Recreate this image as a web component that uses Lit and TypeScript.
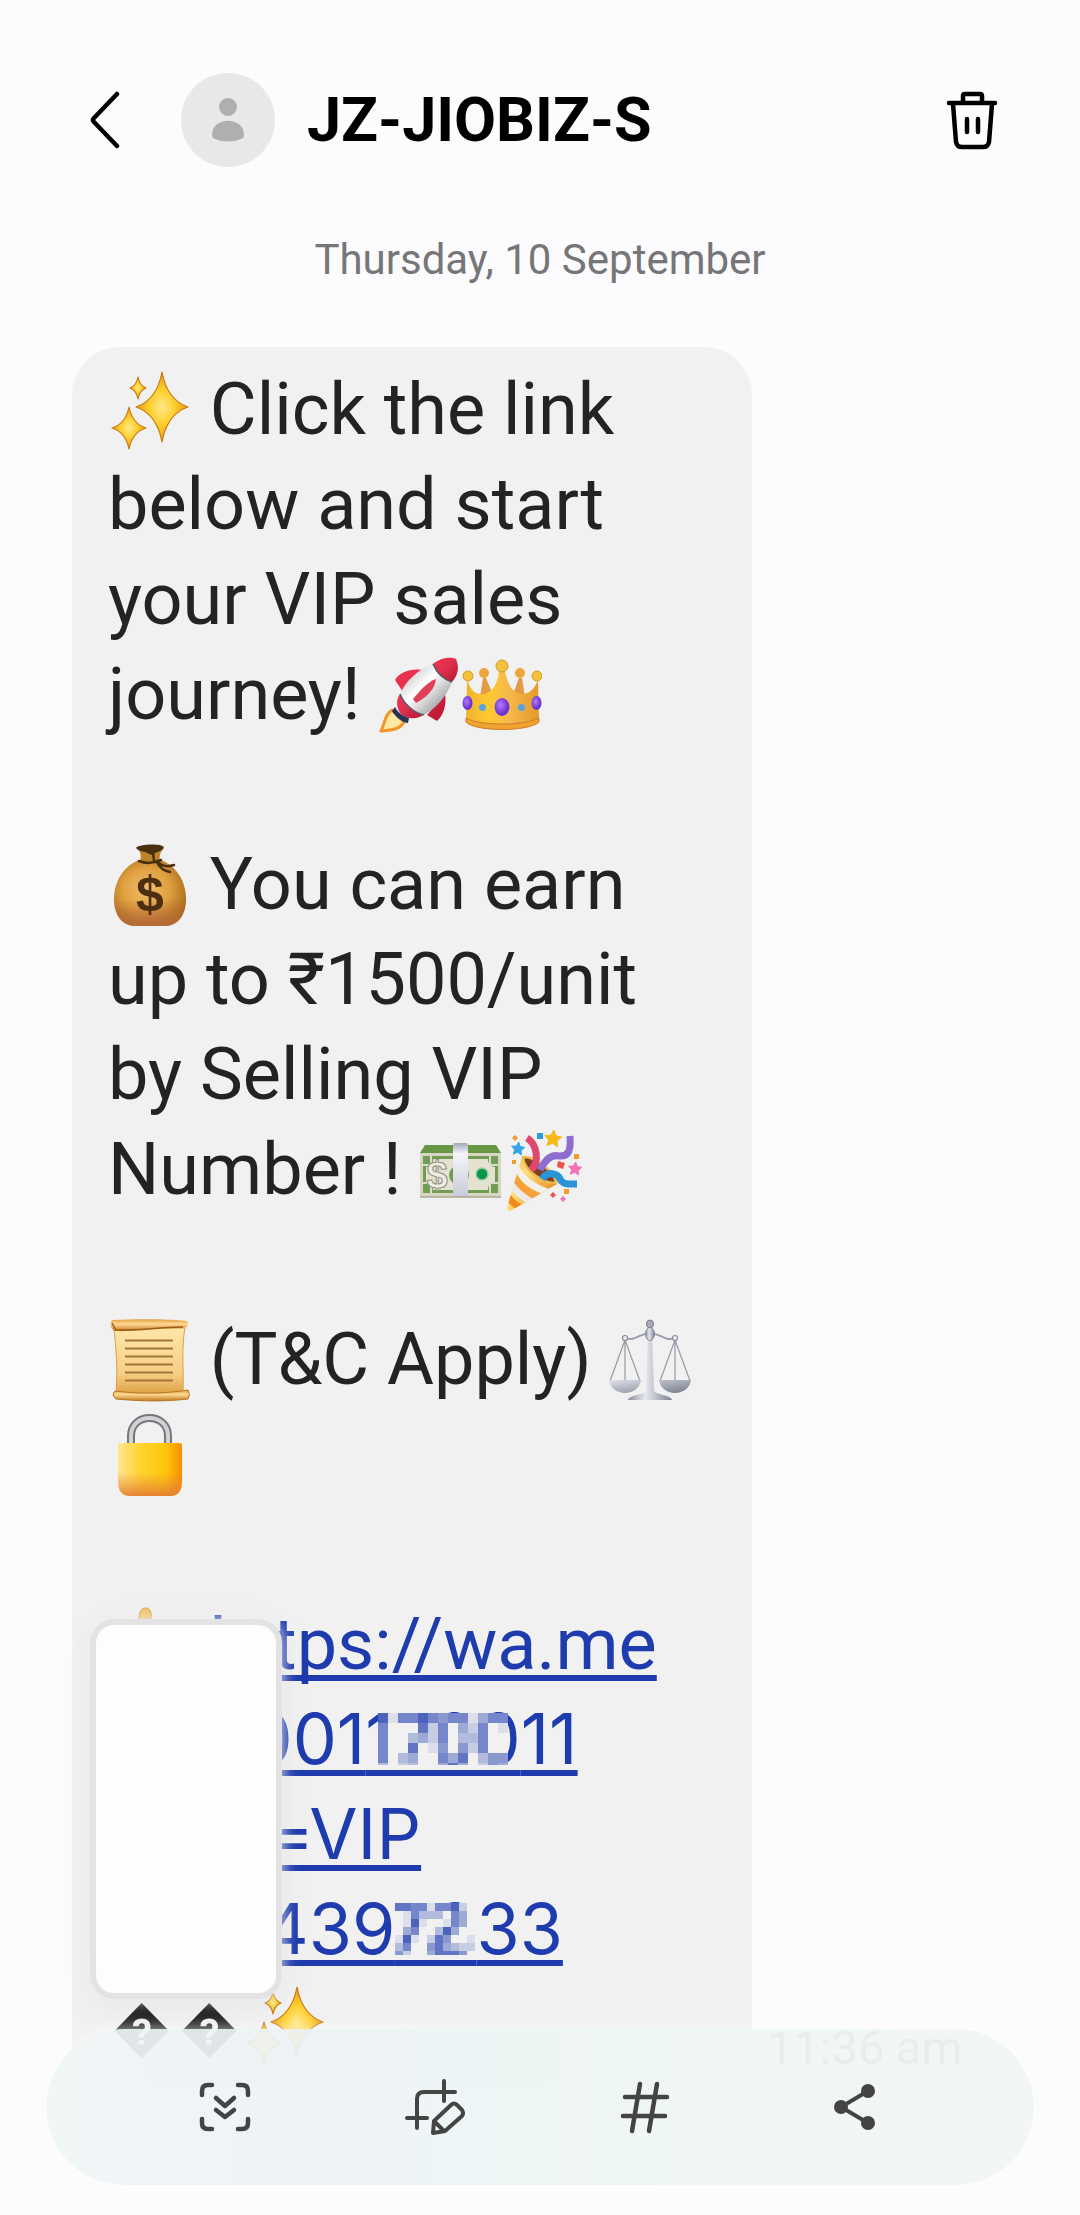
// app.ts
import { LitElement, html, css, svg } from "lit";
import { customElement, property } from "lit/decorators.js";

// four pointed star, used by the sparkles emoji
const star4 = (x: number, y: number, rx: number, ry: number) => {
  const a = rx * 0.2;
  const b = ry * 0.2;
  return svg`<path fill="url(#spark)" stroke="#c97a14" stroke-width="1.2" stroke-linejoin="round"
    d="M${x} ${y - ry} Q${x + a} ${y - b} ${x + rx} ${y} Q${x + a} ${y + b} ${x} ${y + ry}
       Q${x - a} ${y + b} ${x - rx} ${y} Q${x - a} ${y - b} ${x} ${y - ry}Z"/>`;
};

// five pointed confetti star
const star5 = (x: number, y: number, r: number, fill: string) => {
  const points = Array.from({ length: 10 }, (_, i) => {
    const d = i % 2 ? r * 0.48 : r;
    const t = (Math.PI / 5) * i - Math.PI / 2 + 0.1;
    return `${(x + d * Math.cos(t)).toFixed(1)},${(y + d * Math.sin(t)).toFixed(1)}`;
  }).join(" ");
  return svg`<polygon points=${points} fill=${fill} stroke=${fill} stroke-width="1" stroke-linejoin="round"/>`;
};

const EMOJI: Record<string, unknown> = {
  sparkles: svg`
    <defs><radialGradient id="spark"><stop offset="0" stop-color="#ffe88a"/><stop offset=".5" stop-color="#fdce2c"/><stop offset="1" stop-color="#e59a14"/></radialGradient></defs>
    ${star4(54, 39, 26, 35)}${star4(30, 20, 8, 11)}${star4(21, 60, 17, 21)}`,
  rocket: svg`
    <defs>
      <linearGradient id="hull" x1="0.2" y1="0.2" x2="0.8" y2="0.8"><stop offset="0" stop-color="#d4d4d8"/><stop offset=".4" stop-color="#fff"/><stop offset="1" stop-color="#a4a4a8"/></linearGradient>
      <linearGradient id="red" x1="0" y1="0" x2="1" y2="1"><stop offset="0" stop-color="#f1304e"/><stop offset=".4" stop-color="#e2324e"/><stop offset="1" stop-color="#b51530"/></linearGradient>
    </defs>
    <path d="M14 57 C7 61 7 70 3 78 C12 77 22 77 26 69Z" fill="#ffe9a0" stroke="#f2952a" stroke-width="3" stroke-linejoin="round"/>
    <path d="M44 17 C32 15 21 20 17 27 L25 39Z M67 41 C69 52 65 63 59 68 L49 62Z" fill="url(#red)"/>
    <path d="M22 41 C17 48 19 56 23 61 C29 66 38 67 45 62Z" fill="url(#red)"/>
    <path d="M55 11 C40 16 27 29 22 41 C26 51 36 60 46 62 C59 55 69 42 74 29Z" fill="url(#hull)"/>
    <path d="M55 11 C64 4 73 4 78 6 C81 13 81 21 74 29 C65 26 59 21 55 11Z" fill="url(#red)"/>
    <path d="M55 11 C59 21 65 26 74 29 M22 41 C26 51 36 60 46 62" fill="none" stroke="#555b66" stroke-width="1.5"/>
    <path d="M58 26 C50 28 40 40 35 46 L38 50 C49 44 57 36 58 26Z" fill="#df3f57"/>
    <path d="M17 54 C20 60 25 63 31 65 L30 70 C23 69 17 63 14 58Z" fill="#29335a"/>`,
  crown: svg`
    <defs>
      <linearGradient id="gold"><stop offset="0" stop-color="#efb32d"/><stop offset=".3" stop-color="#ffc931"/><stop offset=".6" stop-color="#f5b84c"/><stop offset="1" stop-color="#e39b24"/></linearGradient>
      <radialGradient id="gem" cx=".4" cy=".4"><stop offset="0" stop-color="#b57cff"/><stop offset="1" stop-color="#6d32cc"/></radialGradient>
    </defs>
    <path d="M20 44 L23 25 H26 L34 44Z M52 44 L59 25 H62 L65 44Z" fill="#e39a45"/>
    <circle cx="24" cy="20" r="5" fill="#eda63e"/><circle cx="60" cy="20" r="5" fill="#eda63e"/>
    <path d="M7 27 C12 39 15 41 23 41 C34 40 38 28 39 18 H45 C47 29 52 40 61 41 C69 41 74 37 78 27 L79 68 C72 79 13 79 6 68Z" fill="url(#gold)"/>
    <path d="M6 65 C19 73 66 73 79 65 V69 C69 79 15 79 6 69Z" fill="#f0a32e" stroke="#cf7b2e" stroke-width="1"/>
    <g fill="#f3c23d" stroke="#d69b22"><circle cx="42" cy="13" r="6"/><circle cx="8" cy="23" r="5"/><circle cx="77" cy="23" r="5"/></g>
    <ellipse cx="42" cy="54" rx="7.5" ry="9" fill="url(#gem)"/>
    <ellipse cx="7.5" cy="50" rx="5" ry="7" fill="url(#gem)"/><ellipse cx="76.5" cy="50" rx="5" ry="7" fill="url(#gem)"/>
    <circle cx="22.5" cy="54.5" r="3.5" fill="#55a5e2"/><circle cx="61.5" cy="54.5" r="3.5" fill="#55a5e2"/>`,
  bag: svg`
    <defs>
      <radialGradient id="sack" cx=".45" cy=".45" r=".6"><stop offset="0" stop-color="#f2c06b"/><stop offset=".55" stop-color="#dfa040"/><stop offset="1" stop-color="#a9691a"/></radialGradient>
      <linearGradient id="sackBase" x1="0" y1="0" x2="0" y2="1"><stop offset=".6" stop-color="#b86a3c" stop-opacity="0"/><stop offset="1" stop-color="#b86a3c" stop-opacity=".9"/></linearGradient>
    </defs>
    <path d="M31 17 C16 23 6 38 6 56 C6 72 14 83 28 83 H56 C70 83 78 72 78 56 C78 38 68 23 53 17Z" fill="url(#sack)"/>
    <path d="M31 17 C16 23 6 38 6 56 C6 72 14 83 28 83 H56 C70 83 78 72 78 56 C78 38 68 23 53 17Z" fill="url(#sackBase)"/>
    <path d="M29 5 C34 10 33 15 32 19 H52 C51 14 52 9 56 5Z" fill="#bf822b"/>
    <path d="M28 5 C30 1 53 0 56 4 C55 8 48 9 43 12 C38 8 31 9 28 5Z" fill="#46300f"/>
    <path d="M31 18 C38 21 46 20 53 17 M49 18 C54 24 60 24 66 22 M49 19 C52 26 57 28 62 29 M45 9 L46 18" fill="none" stroke="#46300f" stroke-width="2.5" stroke-linecap="round"/>
    <text x="42" y="68" class="bag-sign">$</text>`,
  cash: svg`
    <defs><linearGradient id="band" x1="0" y1="0" x2="0" y2="1"><stop offset="0" stop-color="#a6a8b8"/><stop offset=".2" stop-color="#f5f5fa"/><stop offset="1" stop-color="#c9c9da"/></linearGradient></defs>
    <path d="M6 17 H77 L82 25 H1Z" fill="#669744"/>
    <rect x="1" y="25" width="81" height="44" fill="#d9d5c3"/>
    <rect x="4" y="28" width="75" height="37" fill="#719c53"/>
    <path d="M14 31 H69 C69 36 72 39 76 39 V54 C72 54 69 57 69 62 H14 C14 57 11 54 7 54 V39 C11 39 14 36 14 31Z" fill="#e5e2d1"/>
    <path d="M4 37 H12 V28 M4 55 H12 V65 M79 37 H71 V28 M79 55 H71 V65" fill="none" stroke="#dedcc9" stroke-width="2"/>
    <circle cx="40" cy="47" r="10" fill="#719c53"/>
    <circle cx="63" cy="46" r="6" fill="#09964a" stroke="#9bcfa2" stroke-width="1.5"/>
    <rect x="34" y="15" width="15" height="54" rx="2" fill="url(#band)"/>
    <path d="M1 69 H82" stroke="#aaa68f" stroke-width="1.5"/>
    <text x="18" y="60" class="cash-sign">$</text>`,
  party: svg`
    <defs>
      <linearGradient id="cone" x1="0" y1="0.3" x2="0.8" y2="0.8"><stop offset="0" stop-color="#f6c45a"/><stop offset=".35" stop-color="#ffdf7a"/><stop offset="1" stop-color="#e89225"/></linearGradient>
      <clipPath id="coneClip"><path d="M21 29 L6 80 Q7 84 11 82 L56 56Z"/></clipPath>
    </defs>
    <path d="M21 29 L6 80 Q7 84 11 82 L56 56Z" fill="url(#cone)"/>
    <g clip-path="url(#coneClip)" fill="none" stroke-width="7">
      <path d="M14 38 Q24 58 50 65" stroke="#f4f0ec"/><path d="M9 54 Q17 68 35 76" stroke="#ece9e9"/><path d="M6 68 Q12 76 20 80" stroke="#f08a1c"/><path d="M12 46 Q20 63 42 71" stroke="#f7a13a"/>
    </g>
    <path d="M22 29 C34 28 53 43 55 55 C43 56 23 43 22 29Z" fill="#7b3f22" stroke="#f0bb4c" stroke-width="2.5"/>
    <g fill="none" stroke-width="7">
      <path d="M30 42 C39 34 36 16 26 10" stroke="#e0476f"/>
      <path d="M39 42 C44 32 50 26 58 28 C68 29 70 22 69 8" stroke="#8e6dd0"/>
      <path d="M41 51 C47 42 57 46 59 51 C62 57 68 56 76 56" stroke="#2995d8"/>
    </g>
    ${star5(52, 11, 9, "#f6b915")}${star5(17, 21, 7, "#35a5e8")}${star5(74, 41, 7, "#f272b4")}
    <rect x="36" y="5" width="6" height="6" fill="#2d9bdd"/>
    <g fill="#f29a2e"><path d="M14 7l3 3-3 3-3-3z"/><rect x="11" y="32" width="4" height="4"/><rect x="73" y="26" width="5" height="5"/><rect x="63" y="61" width="5" height="5"/></g>
    <g fill="#ef5350"><path d="M57 33l7 2-2 6-6-2z"/><path d="M52 64l3 3-3 3-3-3z"/></g>
    <path d="M62 68l3 3-3 3-3-3z" fill="#f272b4"/>`,
  scroll: svg`
    <defs>
      <linearGradient id="paper" x1="0" y1="0" x2="0" y2="1"><stop offset="0" stop-color="#ffe6a8"/><stop offset=".7" stop-color="#f7cf85"/><stop offset="1" stop-color="#dfa348"/></linearGradient>
      <linearGradient id="roll" x1="0" y1="0" x2="0" y2="1"><stop offset="0" stop-color="#dfa043"/><stop offset=".4" stop-color="#ffd992"/><stop offset="1" stop-color="#c27a20"/></linearGradient>
    </defs>
    <path d="M6 10 H77 C73 30 76 55 75 75 H8 C10 50 8 30 6 10Z" fill="url(#paper)" stroke="#d9a04a"/>
    <path d="M4 2 C30 1 60 1 79 3 Q81 5 79 9 L75 10 C50 9 30 14 6 13 Q0 8 4 2Z" fill="url(#roll)"/>
    <path d="M4 5 L8 12 C30 13 50 9 75 9" fill="none" stroke="#9d5c12" stroke-width="1.5"/>
    <path d="M7 73 C30 76 55 76 80 72 Q83 77 80 81 C55 84 30 83 8 81 Q3 77 7 73Z" fill="url(#roll)" stroke="#b87420"/>
    <path d="M17 22.5H65 M17 30.5H65 M17 38.5H65 M17 46.5H65 M17 54.5H65 M17 62.5H65" stroke="#a2763a" stroke-width="2.2"/>`,
  scales: svg`
    <defs>
      <linearGradient id="steel"><stop offset="0" stop-color="#8b8e9b"/><stop offset=".4" stop-color="#e6e8f0"/><stop offset="1" stop-color="#7d8090"/></linearGradient>
      <linearGradient id="pan" x1="0" y1="0" x2="1" y2="1"><stop offset="0" stop-color="#dfe1ea"/><stop offset="1" stop-color="#757989"/></linearGradient>
    </defs>
    <path d="M16 20 C27 24 31 14 41 16 C51 14 55 24 66 20" fill="none" stroke="#9a9daa" stroke-width="2"/>
    <path d="M16 22 L1 63 M16 22 V63 M16 22 L31 63 M66 22 L51 63 M66 22 V63 M66 22 L81 63" stroke="#989ba6" stroke-width="1.2"/>
    <path d="M0 62 H32 C31 70 24 75 16 75 C8 75 1 70 0 62Z M50 62 H82 C81 70 74 75 66 75 C58 75 51 70 50 62Z" fill="url(#pan)"/>
    <path d="M39 18 H43 L45 73 C48 77 62 77 63 82 H19 C20 77 34 77 37 73Z" fill="url(#steel)"/>
    <ellipse cx="41" cy="6" rx="3.5" ry="4" fill="#a7aab6" stroke="#777b88"/><ellipse cx="41" cy="16" rx="4.5" ry="6.5" fill="url(#steel)" stroke="#888b98"/>
    <g fill="#eceef3" stroke="#888b98" stroke-width="1.2"><circle cx="16" cy="20" r="2.5"/><circle cx="66" cy="20" r="2.5"/></g>`,
  lock: svg`
    <defs>
      <linearGradient id="brass"><stop offset="0" stop-color="#ffe590"/><stop offset=".35" stop-color="#ffd42e"/><stop offset=".75" stop-color="#ffc60a"/><stop offset="1" stop-color="#fb8e05"/></linearGradient>
      <linearGradient id="brassBase" x1="0" y1="0" x2="0" y2="1"><stop offset=".55" stop-color="#e8863c" stop-opacity="0"/><stop offset="1" stop-color="#e07a35" stop-opacity=".9"/></linearGradient>
    </defs>
    <path d="M23 31 V23 C23 -1 60 -1 60 23 V31" fill="none" stroke="#77777b" stroke-width="8"/>
    <path d="M23 31 V23 C23 -1 60 -1 60 23 V31" fill="none" stroke="#d2d2d6" stroke-width="4"/>
    <path d="M12 30 H72 Q74 30 74 33 V68 Q74 83 62 83 H22 Q10 83 10 68 V33 Q10 30 12 30Z" fill="url(#brass)"/>
    <path d="M12 30 H72 Q74 30 74 33 V68 Q74 83 62 83 H22 Q10 83 10 68 V33 Q10 30 12 30Z" fill="url(#brassBase)"/>`,
  hand: svg`
    <path d="M31 16 C31 8 34 5 38 5 C42 5 44 9 43 16 L42 30 H78 V40 H48 V72 H18 C4 60 6 42 31 30Z" fill="#f3c262" stroke="#d79c3c"/>`,
};

// strength of every cell in the blurred-out digits, 0 = bubble colour
const MOSAIC_WIDE = [
  "8166865661466",
  "6000726042601",
  "6003426033600",
  "6007015052600",
  "6034006470355",
  "3023004740254",
];
const MOSAIC_NARROW = [
  "7766166820",
  "0163330640",
  "0181001640",
  "0460038400",
  "1810275001",
  "3600574322",
  "5200477750",
];

@customElement("pixel-mask")
export class PixelMask extends LitElement {
  @property({ attribute: false }) rows: string[] = [];
  @property({ type: Number }) cell = 10;

  static styles = css`
    :host {
      position: absolute;
      left: 50%;
      bottom: 16px;
      height: 52px;
      transform: translateX(-50%);
    }
    .cells {
      display: block;
      background: #f1f1f1;
    }
  `;

  render() {
    const width = this.cell * this.rows[0].length;
    return html`
      <svg class="cells" width=${width} height="52" viewBox="0 0 ${width} 52" fill="#2340b0" shape-rendering="crispEdges" aria-hidden="true">
        ${this.rows.map((row, y) =>
          [...row].map(
            (level, x) => svg`<rect x=${x * this.cell} y=${y * this.cell} width=${this.cell} height=${this.cell} opacity=${Number(level) / 10}/>`
          )
        )}
      </svg>
    `;
  }
}

@customElement("app-root")
export class AppRoot extends LitElement {
  static styles = css`
    :host {
      display: block;
      min-height: 100vh;
      overflow: hidden;
      background: #fcfcfe;
      color: #232323;
      font-family: Roboto, "Liberation Sans", sans-serif;
    }
    button {
      display: flex;
      align-items: center;
      justify-content: center;
      padding: 0;
      border: none;
      background: none;
      color: inherit;
      cursor: pointer;
    }
    .header {
      display: flex;
      align-items: center;
      padding: 72px 82px 0 90px;
      color: #000;
    }
    .avatar {
      width: 94px;
      height: 94px;
      margin: 0 32px 0 61px;
      border-radius: 50%;
      background: #e8e8e8;
    }
    .title {
      flex: 1;
      margin: 0;
      font-size: 61px;
      line-height: 96px;
      font-weight: 700;
    }
    .date {
      margin: 68px 0 63px;
      font-size: 42px;
      line-height: 48px;
      text-align: center;
      color: #767678;
    }
    .thread {
      display: flex;
      align-items: flex-end;
      gap: 15px;
      padding: 0 72px;
    }
    .bubble {
      box-sizing: border-box;
      flex: 0 1 680px;
      padding: 15px 36px;
      border-radius: 48px;
      background: #f1f1f1;
      font-size: 72px;
      line-height: 95px;
      white-space: nowrap;
    }
    .bubble p {
      margin: 0 0 95px;
    }
    .bubble p:last-child {
      margin: 0;
    }
    .link {
      color: #1f3cae;
      text-decoration: underline;
      text-decoration-thickness: 6px;
      text-underline-offset: 6px;
      text-decoration-skip-ink: none;
    }
    .figures {
      font-family: Inter, Roboto, sans-serif;
      font-size: 70px;
      line-height: 70px;
    }
    .masked {
      position: relative;
    }
    .unknown {
      padding: 0 4px;
      font-size: 58px;
      line-height: 58px;
    }
    .emoji {
      width: 82px;
      height: 84px;
      vertical-align: -18px;
    }
    .emoji:first-child {
      margin-right: 2px;
    }
    .bag-sign,
    .cash-sign {
      font-family: "Liberation Sans", sans-serif;
      font-weight: 700;
      text-anchor: middle;
    }
    .bag-sign {
      font-size: 50px;
      fill: #4d2e10;
    }
    .cash-sign {
      font-size: 38px;
      fill: #f0eee4;
      stroke: #8e8d7c;
      stroke-width: 1;
    }
    .time {
      font-size: 47px;
      line-height: 78px;
      color: #7a7a7c;
      white-space: nowrap;
    }
    /* floating screenshot preview */
    .preview {
      position: fixed;
      left: 90px;
      bottom: 216px;
      box-sizing: border-box;
      width: 192px;
      height: 380px;
      border: 6px solid #e3e3e5;
      border-radius: 24px;
      background: #fdfdfd;
      box-shadow: 0 0 14px 2px rgba(240, 240, 242, 0.8), 0 6px 36px rgba(0, 0, 0, 0.06);
    }
    .toolbar {
      position: fixed;
      left: 46px;
      right: 46px;
      bottom: 30px;
      display: flex;
      box-sizing: border-box;
      height: 156px;
      padding: 0 74px;
      border-radius: 78px;
      background: linear-gradient(
        90deg,
        rgba(240, 246, 246, 0.93),
        rgba(237, 243, 246, 0.93) 25%,
        rgba(238, 246, 244, 0.93) 60%,
        rgba(241, 246, 243, 0.93)
      );
      box-shadow: 0 0 16px rgba(255, 255, 255, 0.7);
      color: #444;
    }
    .tool {
      flex: 1;
    }
  `;

  emoji(name: string, label: string) {
    return html`<svg class="emoji" viewBox="0 0 82 84" role="img" aria-label=${label}>${EMOJI[name]}</svg>`;
  }

  renderHeader() {
    return html`
      <header class="header">
        <button aria-label="Back">
          <svg width="30" height="58" viewBox="0 0 30 58" fill="none" stroke="#000" stroke-width="4.5" stroke-linecap="round" stroke-linejoin="round">
            <path d="M27 3 L4 27 Q2 29 4 31 L27 55" />
          </svg>
        </button>
        <svg class="avatar" viewBox="0 0 94 94" fill="#afafaf" aria-hidden="true">
          <circle cx="47" cy="34" r="9" />
          <path d="M31 62 C31 43 63 43 63 62 Q63 65 60 66 Q47 71 34 66 Q31 65 31 62Z" />
        </svg>
        <h1 class="title">JZ-JIOBIZ-S</h1>
        <button aria-label="Delete">
          <svg width="52" height="60" viewBox="0 0 52 60" fill="none" stroke="#000" stroke-width="4.5" stroke-linecap="round" stroke-linejoin="round">
            <path d="M3 13 H49 M17 12 V6 Q17 4 19 4 H34 Q36 4 36 6 V12 M7 14 L10 52 Q11 57 16 57 H37 Q42 57 43 52 L46 14 M21 29 V42 M32 29 V42" />
          </svg>
        </button>
      </header>
    `;
  }

  renderMessage() {
    return html`
      <main class="thread">
        <article class="bubble">
          <p>
            ${this.emoji("sparkles", "✨")} Click the link<br />
            below and start<br />
            your VIP sales<br />
            journey! ${this.emoji("rocket", "🚀")}${this.emoji("crown", "👑")}
          </p>
          <p>
            ${this.emoji("bag", "💰")} You can earn<br />
            up to ₹1500/unit<br />
            by Selling VIP<br />
            Number ! ${this.emoji("cash", "💵")}${this.emoji("party", "🎉")}
          </p>
          <p>
            ${this.emoji("scroll", "📜")} (T&amp;C Apply) ${this.emoji("scales", "⚖️")}<br />
            ${this.emoji("lock", "🔒")}
          </p>
          <p>
            ${this.emoji("hand", "👉")} <a class="link" href="https://wa.me/">https://wa.me<br /><span class="figures">/919001<span class="masked">1700<pixel-mask .rows=${MOSAIC_WIDE} .cell=${10}></pixel-mask></span>11<br />?text=VIP<br />%20439<span class="masked">72<pixel-mask .rows=${MOSAIC_NARROW} .cell=${8}></pixel-mask></span>33</span></a><br />
            <span class="unknown">�</span><span class="unknown">�</span>${this.emoji("sparkles", "✨")}
          </p>
        </article>
        <time class="time">11:36 am</time>
      </main>
    `;
  }

  renderToolbar() {
    return html`
      <nav class="toolbar" aria-label="Screenshot tools">
        <button class="tool" aria-label="Scroll capture">
          <svg width="60" height="60" viewBox="0 0 60 60" fill="none" stroke="#444" stroke-width="4.5" stroke-linecap="round" stroke-linejoin="round">
            <path d="M7 18 V14 Q7 8 13 8 H17 M43 8 H47 Q53 8 53 14 V18 M53 42 V46 Q53 52 47 52 H43 M17 52 H13 Q7 52 7 46 V42 M21 21 L30 29 L39 21 M21 33 L30 40 L39 33" />
          </svg>
        </button>
        <button class="tool" aria-label="Crop and draw">
          <svg width="60" height="60" viewBox="0 0 60 60" fill="none" stroke="#444" stroke-width="4" stroke-linecap="round" stroke-linejoin="round">
            <path d="M50 15 H19 Q12 15 12 22 V51 M2 41 H22 M39 4 V24" />
            <path d="M28 56 L29 44 L46 28 Q49 25 52 28 L57 33 Q59 36 57 39 L40 54Z M30 45 L38 53" />
          </svg>
        </button>
        <button class="tool" aria-label="Add tag">
          <svg width="60" height="60" viewBox="0 0 60 60" fill="none" stroke="#444" stroke-width="4.5" stroke-linecap="round">
            <path d="M25 7 L17 54 M42 7 L34 54 M10 20 H52 M8 39 H50" />
          </svg>
        </button>
        <button class="tool" aria-label="Share">
          <svg width="60" height="60" viewBox="0 0 60 60" fill="#444" stroke="#444" stroke-width="4">
            <path d="M43 14 L16 30 L43 46" fill="none" />
            <circle cx="43" cy="14" r="5" /><circle cx="16" cy="30" r="5" /><circle cx="43" cy="46" r="5" />
          </svg>
        </button>
      </nav>
    `;
  }

  render() {
    return html`
      ${this.renderHeader()}
      <p class="date">Thursday, 10 September</p>
      ${this.renderMessage()}
      <div class="preview"></div>
      ${this.renderToolbar()}
    `;
  }
}
